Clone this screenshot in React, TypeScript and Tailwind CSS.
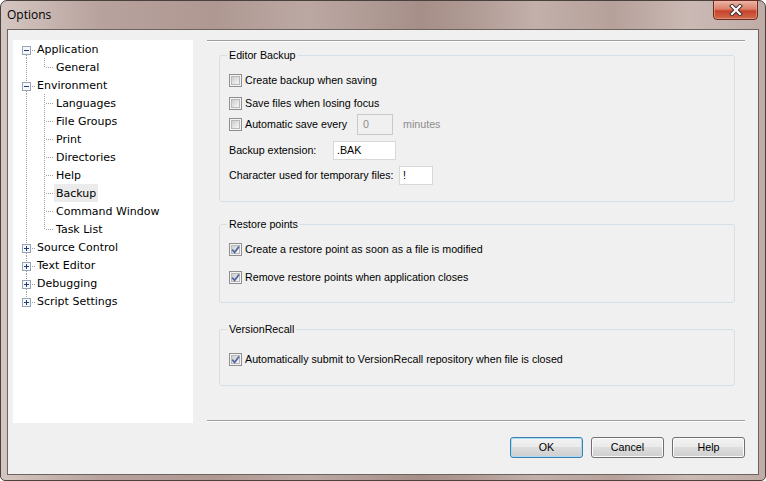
import type { ReactNode } from "react";

type TreeNode = {
  label: string;
  level: 0 | 1;
  sign?: "minus" | "plus";
  first?: boolean;
  last?: boolean;
  lastChild?: boolean;
  selected?: boolean;
};

const tree: TreeNode[] = [
  { label: "Application", level: 0, sign: "minus", first: true },
  { label: "General", level: 1, lastChild: true },
  { label: "Environment", level: 0, sign: "minus" },
  { label: "Languages", level: 1 },
  { label: "File Groups", level: 1 },
  { label: "Print", level: 1 },
  { label: "Directories", level: 1 },
  { label: "Help", level: 1 },
  { label: "Backup", level: 1, selected: true },
  { label: "Command Window", level: 1 },
  { label: "Task List", level: 1, lastChild: true },
  { label: "Source Control", level: 0, sign: "plus" },
  { label: "Text Editor", level: 0, sign: "plus" },
  { label: "Debugging", level: 0, sign: "plus" },
  { label: "Script Settings", level: 0, sign: "plus", last: true },
];

const dot = { stroke: "#a0a0a0", strokeWidth: 1, strokeDasharray: "1 1" };

function Gutter({ node }: { node: TreeNode }) {
  if (node.level === 1) {
    return (
      <svg width="41" height="18" className="shrink-0" shapeRendering="crispEdges">
        <line x1="13.5" y1="0" x2="13.5" y2="18" {...dot} />
        <line x1="31.5" y1="0" x2="31.5" y2={node.lastChild ? 10 : 18} {...dot} />
        <line x1="33" y1="9.5" x2="41" y2="9.5" {...dot} />
      </svg>
    );
  }
  return (
    <svg width="22" height="18" className="shrink-0" shapeRendering="crispEdges">
      {!node.first && <line x1="13.5" y1="0" x2="13.5" y2="6" {...dot} />}
      {!node.last && <line x1="13.5" y1="15" x2="13.5" y2="18" {...dot} />}
      <line x1="19" y1="10.5" x2="22" y2="10.5" {...dot} />
      <rect x="9.5" y="6.5" width="8" height="8" fill="#f6f7f9" stroke="#97a3b6" />
      <line x1="11" y1="10.5" x2="16" y2="10.5" stroke="#1f3c7c" />
      {node.sign === "plus" && <line x1="13.5" y1="8" x2="13.5" y2="13" stroke="#1f3c7c" />}
    </svg>
  );
}

function Check({ checked }: { checked?: boolean }) {
  return (
    <span className="relative flex h-[13px] w-[13px] shrink-0 items-center justify-center border border-[#8f8f8f] bg-[#f4f4f4]">
      <span className="h-[9px] w-[9px] border border-[#b9b9b9] bg-[linear-gradient(135deg,#cdcdcd,#f6f6f6)]" />
      {checked && (
        <svg width="11" height="11" className="absolute inset-0">
          <path d="M2.2 5.6 L4.6 8.3 L9 2.4" fill="none" stroke="#4f67a0" strokeWidth="1.7" />
        </svg>
      )}
    </span>
  );
}

function CheckRow({ label, checked }: { label: string; checked?: boolean }) {
  return (
    <div className="flex h-[16px] items-center gap-[3px]">
      <Check checked={checked} />
      <span>{label}</span>
    </div>
  );
}

function Field({ value, className, disabled }: { value: string; className: string; disabled?: boolean }) {
  return (
    <div
      className={`flex items-center border ${
        disabled ? "border-[#c9c9c9] bg-[#f0f0f0] pl-[5px] text-[#8d8d8d]" : "border-[#d8d8d8] bg-white pl-[3px]"
      } ${className}`}
    >
      {value}
    </div>
  );
}

function Group({ title, className, children }: { title: string; className: string; children: ReactNode }) {
  return (
    <fieldset className={`ml-[12px] mr-[10px] rounded-[3px] border border-[#d5dfe5] ${className}`}>
      <legend className="ml-[7px] px-[2px] leading-[14px]">{title}</legend>
      {children}
    </fieldset>
  );
}

function Separator() {
  return <div className="h-[2px] border-t border-b border-t-[#a0a0a0] border-b-white" />;
}

function Btn({ label, primary }: { label: string; primary?: boolean }) {
  return (
    <button
      type="button"
      className={`flex h-[21px] w-[73px] items-center justify-center rounded-[3px] border bg-[linear-gradient(#f2f2f2_0%,#ebebeb_45%,#dddddd_50%,#cfcfcf_100%)] ${
        primary ? "border-[#3c7fb1] shadow-[inset_0_0_0_1px_#a9def5]" : "border-[#707070] shadow-[inset_0_0_0_1px_#fbfbfb]"
      }`}
    >
      {label}
    </button>
  );
}

export default function App() {
  return (
    <div className="relative h-[481px] w-[766px] rounded-t-[7px] rounded-b-[5px] border border-[#4a403e] bg-[linear-gradient(90deg,#d4c6c2_0%,#b8a29d_13%,#af9892_28%,#bca8a3_40%,#a68f89_55%,#b19b95_62%,#c3b0ab_70%,#b6a09a_80%,#cab9b4_90%,#bfaca7_100%)]">
      <div className="flex h-[28px] items-center pl-[6px] font-['Open_Sans',sans-serif] text-[12px] text-black">
        Options
      </div>

      <div className="absolute left-[712px] top-[-1px] flex h-[20px] w-[45px] items-center justify-center rounded-b-[4px] border border-[#6b2a1f] bg-[linear-gradient(#eab4a5_0%,#dc7f69_45%,#c8432a_55%,#d06a4c_100%)] shadow-[inset_0_0_0_1px_#f0b9aa80]">
        <svg width="14" height="12" viewBox="0 0 14 12">
          <path d="M3 2 L11 10 M11 2 L3 10" stroke="#3c2a26" strokeWidth="4" strokeLinecap="square" />
          <path d="M3 2 L11 10 M11 2 L3 10" stroke="#ffffff" strokeWidth="2.2" strokeLinecap="square" />
        </svg>
      </div>

      <div className="ml-[6px] h-[446px] w-[752px] border border-[#6d6360] bg-[#f0f0f0] font-['Liberation_Sans',Arial,sans-serif] text-[10.7px] text-black">
        <div className="flex pl-[5px] pt-[10px]">
          <div className="h-[383px] w-[180px] bg-white font-['DejaVu_Sans',Verdana,sans-serif] text-[11px] text-black">
            {tree.map((node) => (
              <div key={node.label} className="flex h-[18px] items-center">
                <Gutter node={node} />
                <span
                  className={`block h-[18px] px-[2px] pt-[1px] leading-[18px] ${node.selected ? "bg-[#ebebeb]" : ""}`}
                >
                  {node.label}
                </span>
              </div>
            ))}
          </div>

          <div className="ml-[14px] flex h-[383px] w-[538px] flex-col">
            <Separator />

            <Group title="Editor Backup" className="mt-[6px]">
              <div className="pb-[16px] pl-[9px] pt-[10px]">
                <CheckRow label="Create backup when saving" />
                <div className="mt-[7px]">
                  <CheckRow label="Save files when losing focus" />
                </div>
                <div className="mt-[3px] flex h-[21px] items-center">
                  <div className="w-[128px]">
                    <CheckRow label="Automatic save every" />
                  </div>
                  <Field value="0" disabled className="h-[21px] w-[36px]" />
                  <span className="ml-[10px] text-[#8d8d8d]">minutes</span>
                </div>
                <div className="mt-[6px] flex h-[19px] items-center">
                  <span className="w-[104px]">Backup extension:</span>
                  <Field value=".BAK" className="h-[19px] w-[63px]" />
                </div>
                <div className="mt-[5px] flex h-[20px] items-center">
                  <span className="w-[170px]">Character used for temporary files:</span>
                  <Field value="!" className="h-[19px] w-[34px]" />
                </div>
              </div>
            </Group>

            <Group title="Restore points" className="mt-[15px]">
              <div className="pb-[17px] pl-[9px] pt-[10px]">
                <CheckRow label="Create a restore point as soon as a file is modified" checked />
                <div className="mt-[12px]">
                  <CheckRow label="Remove restore points when application closes" checked />
                </div>
              </div>
            </Group>

            <Group title="VersionRecall" className="mt-[19px]">
              <div className="pb-[18px] pl-[9px] pt-[15px]">
                <CheckRow label="Automatically submit to VersionRecall repository when file is closed" checked />
              </div>
            </Group>

            <div className="mb-[1px] mt-auto">
              <Separator />
            </div>
          </div>
        </div>

        <div className="mt-[14px] flex justify-end gap-[8px] pr-[13px]">
          <Btn label="OK" primary />
          <Btn label="Cancel" />
          <Btn label="Help" />
        </div>
      </div>
    </div>
  );
}
